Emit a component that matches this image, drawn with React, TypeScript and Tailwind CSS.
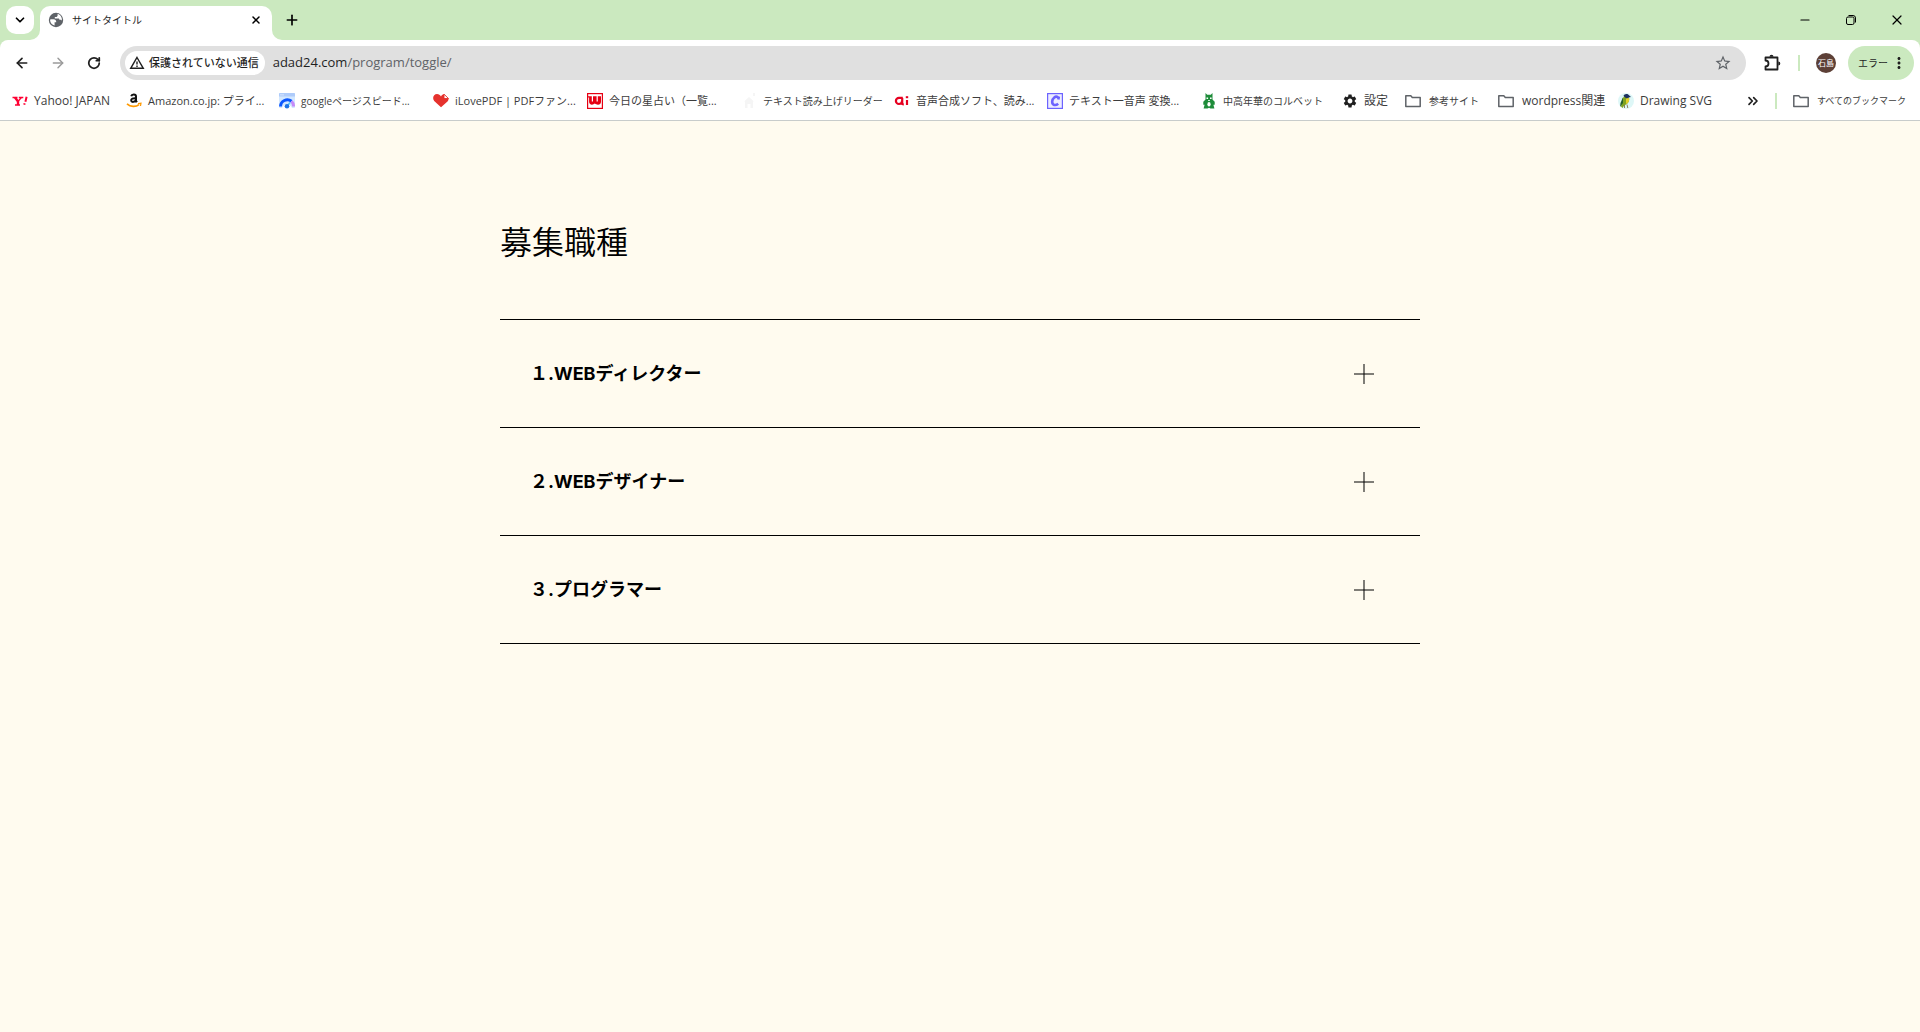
import * as React from 'react';
import { ArrowLeft, ArrowRight, ChevronDown, ChevronsRight, Minus, Plus, RotateCw, X } from 'lucide-react';
import { MdMoreVert, MdOutlineStarBorder, MdSettings } from 'react-icons/md';
import clsx from 'clsx';

function GlobeIcon() {
    return (
        <svg viewBox="0 0 16 16" className="size-4 shrink-0">
            <circle cx="8" cy="8" r="7.2" fill="#5f6368" />
            <path d="M2.400 7.200h3.200c1.600 0 2.600 1 2.600 2.400v.6H6.600v3.400C4 13 2.400 11 2.100 8.600zM9.600 1.800v1.600c0 .9-.8 1.500-1.700 1.500H6.800v1.700h3.400c.8 0 1.200.5 1.200 1.200h1.200c.7 0 1.200.5 1.300 1.100.5-3-1.400-6.200-4.300-7.100z" fill="#fff" />
        </svg>
    );
}

function FolderIcon() {
    return (
        <svg viewBox="0 0 16 16" className="size-4 shrink-0" fill="none" stroke="#5f6368" strokeWidth="1.5">
            <path d="M.8 2.800h5l1.500 1.700h7.900v9.100H.8z" strokeLinejoin="round" />
        </svg>
    );
}

function YahooIcon() {
    return (
        <svg viewBox="0 0 16 16" className="size-4 shrink-0" fill="none" stroke="#ff0033">
            <path d="M.5 4.500h5M6.800 4.500h4.500M3 12h5" strokeWidth="1.300" />
            <path d="M3 4.500l3 4V12" strokeWidth="2.400" />
            <path d="M9.300 4.500L6 8.500" strokeWidth="1.300" />
            <path d="M14.600 3.800l-1.200 5M12.600 10.200l-.3 1.500" strokeWidth="2" />
        </svg>
    );
}

function AmazonIcon() {
    return (
        <svg viewBox="0 0 16 16" className="size-4 shrink-0" fill="none">
            <path d="M5.200 3.300C5.800.9 10 .9 10 3.500v4.300l1 1.300M9.800 5.200C7 5 5 5.800 5.200 7.500c.3 2.200 4 1.700 4.600-.8" stroke="#111" strokeWidth="2" />
            <path d="M1 10.800c3.500 3.200 9 3.200 12 .8" stroke="#ff9900" strokeWidth="1.700" />
            <path d="M12 10.600l3-.3-.5 2.700" stroke="#ff9900" strokeWidth="1.200" />
        </svg>
    );
}

function SpeedIcon() {
    return (
        <svg viewBox="0 0 16 16" className="size-4 shrink-0" fill="none">
            <rect width="16" height="15" rx="1" fill="#d2e7ff" />
            <path d="M0 1a1 1 0 011-1h14a1 1 0 011 1v2.500H0z" fill="#aecbfa" />
            <circle cx="2" cy="1.800" r=".6" fill="#fff" />
            <circle cx="4" cy="1.800" r=".6" fill="#fff" />
            <path d="M3 15a5.500 5.500 0 0110 0z" fill="#fff" />
            <path d="M1.500 13.500a6.800 6.800 0 0111-5.200" stroke="#0b57ff" strokeWidth="3" />
            <path d="M12.500 8.300a6.800 6.800 0 012 5.200" stroke="#c58af9" strokeWidth="3" />
            <path d="M8 13.500l3-4" stroke="#4fc3f7" strokeWidth="1.600" />
            <circle cx="8" cy="13.200" r="2.300" fill="#1a73e8" />
        </svg>
    );
}

function HeartIcon() {
    return (
        <svg viewBox="0 0 16 16" className="size-4 shrink-0">
            <path d="M8 14.300L1.200 8C-1.200 5 .8 1 4 1c1.800 0 3.200.9 4 2.400C9 1.600 10 1.200 11 1.200L15.500 5.500c.2 1-.2 2-1 2.900z" fill="#e5322d" />
            <path d="M11 1.200v4.300h4.500z" fill="#fff" stroke="#e5322d" strokeWidth=".9" />
        </svg>
    );
}

function FortuneIcon() {
    return (
        <svg viewBox="0 0 16 16" className="size-4 shrink-0" fill="none">
            <rect x=".6" y=".6" width="14.800" height="14.800" fill="#fff" stroke="#e60012" strokeWidth="1.200" />
            <path d="M1 3.200h3.800v5.300h1.200V3.200h3.600v5.300h1.200V3.200H14v5.600c0 1.900-1.500 3-3.100 2.900-1.200 0-2.200-.3-3-1.100-.9.800-1.900 1.100-2.900 1.100-1.700 0-2.900-1.200-2.900-2.900V4.600H1z" fill="#e60012" />
        </svg>
    );
}

function HouseIcon() {
    return (
        <svg viewBox="0 0 16 16" className="size-4 shrink-0" fill="#f5f5f5">
            <path d="M8 4l5 4.500h-1V15H9.500v-4h-3v4H4V8.500H3zM12 0h2v3h-2z" />
        </svg>
    );
}

function AiIcon() {
    return (
        <svg viewBox="0 0 16 16" className="size-4 shrink-0" fill="none" stroke="#e60020" strokeWidth="2.200">
            <path d="M8.800 4.800H5a3 3 0 000 6.200c2 0 3.200-1.500 3.200-3.500V5v5.200c0 .9.500 1.100 1.600 1.100M13 7v5" />
            <path d="M13 3.200v2" strokeWidth="2.400" />
        </svg>
    );
}

function LetterCIcon() {
    return (
        <svg viewBox="0 0 16 16" className="size-4 shrink-0" fill="none">
            <rect x=".6" y=".6" width="14.800" height="14.800" fill="#ededff" stroke="#6c63ff" strokeWidth="1.200" />
            <path d="M11.300 6.500l.6-3M11 4.300C8.500 2.500 5.500 5 5.200 8.500c-.2 4 3.500 4.300 6 2.300" stroke="#6c63ff" strokeWidth="2.600" />
        </svg>
    );
}

function CatIcon() {
    return (
        <svg viewBox="0 0 16 16" className="size-4 shrink-0">
            <path d="M4.500 0l1.700 1.800h3.600L11.500 0v6.500l2.200 2.200v3h-1.300l1 3.800H9.500L8 14.800l-1.500.7H2.600l1-3.800H2.300v-3l2.200-2.200z" fill="#1e8c3a" />
            <path d="M5.500 4.500h1.600v1.400H5.500zM9 4.500h1.600v1.400H9zM7.200 7h1.600v1H7.200z" fill="#fff" />
            <ellipse cx="8" cy="11.300" rx="1.600" ry="2.200" fill="#fff" />
        </svg>
    );
}

function BirdIcon() {
    return (
        <svg viewBox="0 0 16 16" className="size-4 shrink-0">
            <circle cx="8" cy="8" r="8" fill="#def7f7" />
            <path d="M3 13.500L4 6l3-3.500 4 2c1 3-1 7-4.500 7.500L4.500 15z" fill="#7da321" />
            <path d="M5 4.500L2.500 10l-.5 4 3-4z" fill="#23602f" />
            <path d="M5.500 3C6 .5 9.800.2 11 2.200L13 4l-2.500.5L9 6z" fill="#1d3160" />
            <path d="M8 5.500l2.800-.5c1 2.500-.3 5-2.800 6z" fill="#e2cf2b" />
            <path d="M6.500 12v3M9 11.500l.8 3.500" stroke="#746232" strokeWidth=".8" />
        </svg>
    );
}

function PuzzleIcon() {
    return (
        <svg viewBox="0 0 20 20" className="size-5" fill="none" stroke="#1f1f1f" strokeWidth="1.800">
            <path d="M3.500 4.500h12v12h-12v-3a3 3 0 000-6z" strokeLinejoin="round" />
            <path d="M7.500 3.800a2 2 0 014 0zM16.300 8.500a2 2 0 010 4z" fill="#1f1f1f" stroke="none" />
        </svg>
    );
}

function WarningIcon() {
    return (
        <svg viewBox="0 0 16 16" className="size-4" fill="none" stroke="#1f1f1f" strokeWidth="1.400">
            <path d="M8 2.500L14.300 13.300H1.700z" />
            <path d="M8 6.500v3M8 10.600v1.300" />
        </svg>
    );
}

function RestoreIcon() {
    return (
        <svg viewBox="0 0 12 12" className="size-3" fill="none" stroke="#000">
            <rect x="1.500" y="3" width="7.500" height="7.500" rx="1.500" />
            <path d="M3.500 1.500H8A2.500 2.500 0 0110.500 4v4.500" />
        </svg>
    );
}

type Bookmark = {
    label: string;
    icon: React.ReactNode;
    className: string;
};

const bookmarks: Bookmark[] = [
    { label: 'Yahoo! JAPAN', icon: <YahooIcon />, className: 'w-[114px] gap-1.5 text-xs' },
    { label: 'Amazon.co.jp: プライ...', icon: <AmazonIcon />, className: 'w-[153px] gap-1.5 text-[11px]' },
    { label: 'googleページスピード...', icon: <SpeedIcon />, className: 'w-[154px] gap-1.5 text-[10px]' },
    { label: 'iLovePDF | PDFファン...', icon: <HeartIcon />, className: 'w-[154px] gap-1.5 text-[11px]' },
    { label: '今日の星占い（一覧...', icon: <FortuneIcon />, className: 'w-[154px] gap-1.5 text-[11px]' },
    { label: 'テキスト読み上げリーダー', icon: <HouseIcon />, className: 'w-[153px] gap-1.5 text-[10px]' },
    { label: '音声合成ソフト、読み...', icon: <AiIcon />, className: 'w-[153px] gap-1.5 text-[11px]' },
    { label: 'テキスト一音声 変換...', icon: <LetterCIcon />, className: 'w-[154px] gap-1.5 text-[11px]' },
    { label: '中高年華のコルベット', icon: <CatIcon />, className: 'w-[141px] gap-1.5 text-[10px]' },
    { label: '設定', icon: <MdSettings className="size-4 shrink-0 text-[#1f1f1f]" />, className: 'w-[63px] gap-1.5 text-xs' },
    { label: '参考サイト', icon: <FolderIcon />, className: 'w-[93px] gap-2 text-[10px]' },
    { label: 'wordpress関連', icon: <FolderIcon />, className: 'w-[120px] gap-2 text-xs' },
    { label: 'Drawing SVG', icon: <BirdIcon />, className: 'w-[93px] gap-1.5 text-xs' },
];

const jobs = ['１.WEBディレクター', '２.WEBデザイナー', '３.プログラマー'];

function TabStrip() {
    return (
        <div className="flex h-10 items-end bg-[#cbe9bf]">
            <button type="button" aria-label="タブを検索" className="mb-1.5 ml-1.5 flex size-7 items-center justify-center self-end rounded-[10px] bg-white">
                <ChevronDown className="size-3.5" strokeWidth={3} />
            </button>
            <svg viewBox="0 0 10 10" className="-ml-1 size-2.5 fill-white">
                <path d="M10 0v10H0A10 10 0 0010 0z" />
            </svg>
            <div className="flex h-[34px] w-[232px] items-center rounded-t-[10px] bg-white pr-2 pb-1.5 pl-2">
                <GlobeIcon />
                <span className="ml-2 flex-1 text-[10px] text-[#1f1f1f]">サイトタイトル</span>
                <button type="button" aria-label="タブを閉じる" className="flex size-4 items-center justify-center">
                    <X className="size-3" strokeWidth={3} />
                </button>
            </div>
            <svg viewBox="0 0 10 10" className="size-2.5 fill-white">
                <path d="M0 0v10h10A10 10 0 010 0z" />
            </svg>
            <button type="button" aria-label="新しいタブ" className="ml-0.5 flex h-10 w-4 items-center justify-center">
                <Plus className="size-4 shrink-0" strokeWidth={2.5} />
            </button>
            <div className="ml-auto flex h-10">
                <button type="button" aria-label="最小化" className="flex w-[46px] items-center justify-center">
                    <Minus className="size-3.5" strokeWidth={1.8} />
                </button>
                <button type="button" aria-label="元に戻す" className="flex w-[46px] items-center justify-center">
                    <RestoreIcon />
                </button>
                <button type="button" aria-label="閉じる" className="flex w-[46px] items-center justify-center">
                    <X className="size-4" strokeWidth={1.8} />
                </button>
            </div>
        </div>
    );
}

function Toolbar() {
    return (
        <div className="bg-[#cbe9bf]">
            <div className="flex h-12 items-center rounded-t-lg bg-white pr-1.5 pb-0.5 pl-3">
                <button type="button" aria-label="戻る" className="flex size-5 items-center justify-center">
                    <ArrowLeft className="size-4 text-[#1f1f1f]" strokeWidth={2.5} />
                </button>
                <button type="button" aria-label="進む" className="ml-4 flex size-5 items-center justify-center">
                    <ArrowRight className="size-4 text-[#9a9a9a]" strokeWidth={2.2} />
                </button>
                <button type="button" aria-label="再読み込み" className="ml-4 flex size-5 items-center justify-center">
                    <RotateCw className="size-3.5 text-[#1f1f1f]" strokeWidth={3} />
                </button>
                <div className="ml-4 flex h-[34px] flex-1 items-center rounded-full bg-[#e0e0e0] pr-3.5 pl-[5px]">
                    <button type="button" className="flex h-6 items-center gap-1 rounded-full bg-white pr-1.5 pl-1 text-[11px] font-medium text-[#1f1f1f]">
                        <WarningIcon />
                        保護されていない通信
                    </button>
                    <div className="ml-2 flex-1 text-[13px] text-[#5f6368]">
                        <span className="text-[#1f1f1f]">adad24.com</span>/program/toggle/
                    </div>
                    <button type="button" aria-label="ブックマークに追加">
                        <MdOutlineStarBorder className="size-[18px] text-[#5f6368]" />
                    </button>
                </div>
                <button type="button" aria-label="拡張機能" className="ml-4">
                    <PuzzleIcon />
                </button>
                <span className="ml-4 h-4 w-0.5 bg-[#cbe9bf]" />
                <button type="button" className="ml-4 flex size-5 items-center justify-center rounded-full bg-[#5d4037] text-[8px] text-white">石島</button>
                <button type="button" className="ml-3 flex h-[34px] w-[66px] items-center justify-between rounded-full bg-[#cbe9bf] pr-1.5 pl-2.5 text-[10px] whitespace-nowrap text-[#1f1f1f]">
                    エラー
                    <MdMoreVert className="size-[18px] shrink-0" />
                </button>
            </div>
        </div>
    );
}

function BookmarkBar() {
    return (
        <nav className="flex h-[33px] items-center border-b border-[#c8cccb] bg-white pr-3.5 pb-1.5 pl-3 text-[#3c3c3c]">
            {bookmarks.map((item) => (
                <a key={item.label} href="#" className={clsx('flex h-5 shrink-0 items-center whitespace-nowrap', item.className)}>
                    {item.icon}
                    {item.label}
                </a>
            ))}
            <button type="button" aria-label="その他のブックマーク" className="ml-auto">
                <ChevronsRight className="size-4 text-[#1f1f1f]" strokeWidth={2.5} />
            </button>
            <span className="ml-3.5 h-4 w-0.5 bg-[#cbe9bf]" />
            <a href="#" className="ml-4 flex items-center gap-2 text-[9px] whitespace-nowrap">
                <FolderIcon />
                すべてのブックマーク
            </a>
        </nav>
    );
}

function JobItem({ title }: { title: string }) {
    const [open, setOpen] = React.useState(false);

    return (
        <li className="border-b border-black">
            <button
                type="button"
                aria-expanded={open}
                onClick={() => setOpen(!open)}
                className="flex w-full items-center justify-between py-10 pr-[46px] pl-[30px] text-left font-['Inter','Noto_Sans_CJK_JP',sans-serif] text-lg leading-[27px] font-bold text-black"
            >
                {title}
                <svg viewBox="0 0 20 20" className="size-5 stroke-black/50" strokeWidth="2">
                    <path d="M0 10h20" />
                    {!open && <path d="M10 0v20" />}
                </svg>
            </button>
        </li>
    );
}

export default function App() {
    return (
        <div className="min-h-screen bg-[#fffbef] font-['Open_Sans','Noto_Sans_CJK_JP',sans-serif]">
            <header>
                <TabStrip />
                <Toolbar />
                <BookmarkBar />
            </header>
            <main className="mx-auto max-w-[920px] pt-[97px]">
                <h1 className="text-[32px] leading-[48px] font-[350] text-black">募集職種</h1>
                <ul className="mt-[53px] border-t border-black">
                    {jobs.map((job) => (
                        <JobItem key={job} title={job} />
                    ))}
                </ul>
            </main>
        </div>
    );
}
